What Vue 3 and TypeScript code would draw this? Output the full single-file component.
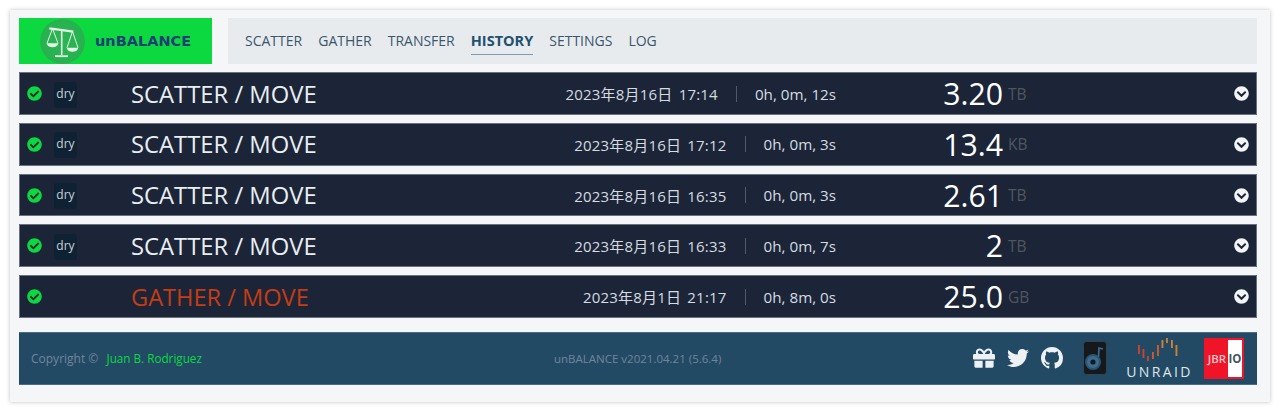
<script setup lang="ts">
interface Op {
  ok: boolean
  dry: boolean
  title: string
  kind: 'scatter' | 'gather'
  date: string
  took: string
  size: string
  unit: string
}

const tabs = ['SCATTER', 'GATHER', 'TRANSFER', 'HISTORY', 'SETTINGS', 'LOG']

const ops: Op[] = [
  { ok: true, dry: true, title: 'SCATTER / MOVE', kind: 'scatter', date: '2023年8月16日 17:14', took: '0h, 0m, 12s', size: '3.20', unit: 'TB' },
  { ok: true, dry: true, title: 'SCATTER / MOVE', kind: 'scatter', date: '2023年8月16日 17:12', took: '0h, 0m, 3s', size: '13.4', unit: 'KB' },
  { ok: true, dry: true, title: 'SCATTER / MOVE', kind: 'scatter', date: '2023年8月16日 16:35', took: '0h, 0m, 3s', size: '2.61', unit: 'TB' },
  { ok: true, dry: true, title: 'SCATTER / MOVE', kind: 'scatter', date: '2023年8月16日 16:33', took: '0h, 0m, 7s', size: '2', unit: 'TB' },
  { ok: true, dry: false, title: 'GATHER / MOVE', kind: 'gather', date: '2023年8月1日 21:17', took: '0h, 8m, 0s', size: '25.0', unit: 'GB' }
]

// x, top, height of the unraid logo bars
const bars = [
  { x: 4, y: 7, h: 9, c: '#c8432e' },
  { x: 8.5, y: 11, h: 9, c: '#c8432e' },
  { x: 13, y: 18, h: 5, c: '#c8432e' },
  { x: 18, y: 14, h: 7, c: '#cc5a30' },
  { x: 23, y: 7, h: 11, c: '#cc5a30' },
  { x: 27.5, y: 2, h: 8, c: '#cf7f35' },
  { x: 32, y: 0, h: 5, c: '#cf7f35' },
  { x: 37, y: 2, h: 8, c: '#cf7f35' },
  { x: 41.5, y: 7, h: 11, c: '#cf7f35' }
]
</script>

<template>
  <div class="page">
    <div class="card">
      <header class="top">
        <div class="logo">
          <div class="logo-disc">
            <svg viewBox="0 0 45 45" width="45" height="45" fill="none" stroke="#e6f5e8" stroke-width="1">
              <path d="M21.7 10v26" stroke-width="1.6" />
              <path d="M9.3 9.3l24 3.4" stroke-width="2.2" />
              <path d="M15 37.2h13" stroke-width="1.8" />
              <path d="M12.5 9.5L7 24.3M12.5 9.5l5.5 14.8M32.5 12.5L27 28.7M32.5 12.5l5.5 16.2" />
              <path d="M6.7 24.3h11.6c-.8 3-3 4-5.8 4s-5-1-5.8-4zM26.7 28.7h11.6c-.8 3-3 4-5.8 4s-5-1-5.8-4z" fill="#e6f5e8" stroke="none" />
            </svg>
          </div>
          <span class="logo-name">unBALANCE</span>
        </div>
        <nav class="tabs">
          <a v-for="tab in tabs" :key="tab" :class="['tab', { active: tab === 'HISTORY' }]">{{ tab }}</a>
        </nav>
      </header>

      <section class="ops">
        <div v-for="(op, i) in ops" :key="i" class="op">
          <svg class="check" viewBox="0 0 512 512">
            <path d="M504 256c0 136.967-111.033 248-248 248S8 392.967 8 256 119.033 8 256 8s248 111.033 248 248zM227.314 387.314l184-184c6.248-6.248 6.248-16.379 0-22.627l-22.627-22.627c-6.248-6.249-16.379-6.249-22.628 0L216 308.118l-70.059-70.059c-6.248-6.248-16.379-6.248-22.628 0l-22.627 22.627c-6.248 6.248-6.248 16.379 0 22.627l104 104c6.249 6.25 16.379 6.25 22.628.001z" />
          </svg>
          <div class="dry-cell"><span v-if="op.dry" class="dry">dry</span></div>
          <div :class="['title', op.kind]">{{ op.title }}</div>
          <div class="when">
            <span class="date">{{ op.date }}</span>
            <span class="sep"></span>
            <span>{{ op.took }}</span>
          </div>
          <div class="size">{{ op.size }}</div>
          <div class="unit">{{ op.unit }}</div>
          <svg class="more" viewBox="0 0 512 512">
            <path d="M504 256c0 137-111 248-248 248S8 393 8 256 119 8 256 8s248 111 248 248zM273 369.9l135.5-135.5c9.4-9.4 9.4-24.6 0-33.9l-17-17c-9.4-9.4-24.6-9.4-33.9 0L256 285.1 154.4 183.5c-9.4-9.4-24.6-9.4-33.9 0l-17 17c-9.4 9.4-9.4 24.6 0 33.9L239 369.9c9.4 9.4 24.6 9.4 34 0z" />
          </svg>
        </div>
      </section>

      <footer class="foot">
        <div class="copy">Copyright ©&nbsp;&nbsp;<a class="author">Juan B. Rodriguez</a></div>
        <div class="version">unBALANCE v2021.04.21 (5.6.4)</div>
        <div class="links">
          <svg class="glyph" viewBox="0 0 512 512">
            <path d="M32 448c0 17.7 14.3 32 32 32h160V320H32v128zm256 32h160c17.7 0 32-14.3 32-32V320H288v160zm192-320h-42.1c6.2-12.1 10.1-25.5 10.1-40 0-48.5-39.5-88-88-88-41.6 0-68.5 21.3-103 68.3-34.5-47-61.4-68.3-103-68.3-48.5 0-88 39.5-88 88 0 14.5 3.8 27.9 10.1 40H32c-17.7 0-32 14.3-32 32v80c0 8.8 7.2 16 16 16h480c8.8 0 16-7.2 16-16v-80c0-17.7-14.3-32-32-32zm-326.1 0c-22.1 0-40-17.9-40-40s17.9-40 40-40c19.9 0 34.6 3.3 86.1 80h-86.1zm206.1 0h-86.1c51.4-76.5 65.7-80 86.1-80 22.1 0 40 17.9 40 40s-17.9 40-40 40z" />
          </svg>
          <svg class="glyph" viewBox="0 0 512 512">
            <path d="M459.37 151.716c.325 4.548.325 9.097.325 13.645 0 138.72-105.583 298.558-298.558 298.558-59.452 0-114.68-17.219-161.137-47.106 8.447.974 16.568 1.299 25.34 1.299 49.055 0 94.213-16.568 130.274-44.832-46.132-.975-84.792-31.188-98.112-72.772 6.498.974 12.995 1.624 19.818 1.624 9.421 0 18.843-1.3 27.614-3.573-48.081-9.747-84.143-51.98-84.143-102.985v-1.299c13.969 7.797 30.214 12.67 47.431 13.319-28.264-18.843-46.781-51.005-46.781-87.391 0-19.492 5.197-37.36 14.294-52.954 51.655 63.675 129.3 105.258 216.365 109.807-1.624-7.797-2.599-15.918-2.599-24.04 0-57.828 46.782-104.934 104.934-104.934 30.213 0 57.502 12.67 76.67 33.137 23.715-4.548 46.456-13.32 66.599-25.34-7.798 24.366-24.366 44.833-46.132 57.827 21.117-2.273 41.584-8.122 60.426-16.243-14.292 20.791-32.161 39.308-52.628 54.253z" />
          </svg>
          <svg class="glyph" viewBox="0 0 16 16">
            <path d="M8 0C3.58 0 0 3.58 0 8c0 3.54 2.29 6.53 5.47 7.59.4.07.55-.17.55-.38 0-.19-.01-.82-.01-1.49-2.01.37-2.53-.49-2.69-.94-.09-.23-.48-.94-.82-1.13-.28-.15-.68-.52-.01-.53.63-.01 1.08.58 1.23.82.72 1.21 1.87.87 2.33.66.07-.52.28-.87.51-1.07-1.78-.2-3.64-.89-3.64-3.95 0-.87.31-1.59.82-2.15-.08-.2-.36-1.02.08-2.12 0 0 .67-.21 2.2.82.64-.18 1.32-.27 2-.27.68 0 1.36.09 2 .27 1.53-1.04 2.2-.82 2.2-.82.44 1.1.16 1.92.08 2.12.51.56.82 1.27.82 2.15 0 3.07-1.87 3.75-3.65 3.95.29.25.54.73.54 1.48 0 1.07-.01 1.93-.01 2.2 0 .21.15.46.55.38A8.013 8.013 0 0016 8c0-4.42-3.58-8-8-8z" />
          </svg>
          <svg class="vinyl" viewBox="0 0 24 34" width="24" height="34">
            <rect x="0.5" y="0.5" width="23" height="33" rx="3" fill="#16191c" stroke="#2f4456" />
            <circle cx="10" cy="21" r="7" fill="#3b6d92" stroke="#2c5470" stroke-width="2" />
            <circle cx="10" cy="21" r="2.6" fill="#16191c" />
            <path d="M15.5 16L16 7l4 1" fill="none" stroke="#3b6d92" stroke-width="1.7" />
          </svg>
          <div class="unraid">
            <svg viewBox="0 0 52 24" width="52" height="24">
              <rect v-for="b in bars" :key="b.x" :x="b.x" :y="b.y + 1" width="1.9" :height="b.h" :fill="b.c" />
            </svg>
            <span>UNRAID</span>
          </div>
          <div class="jbrio"><span class="jbr">JBR</span><span class="io">IO</span></div>
        </div>
      </footer>
    </div>
  </div>
</template>

<style>
html,
body {
  margin: 0;
  background: #fff;
}
</style>

<style scoped>
.page {
  height: 411px;
  padding: 10px 10px 9px;
  box-sizing: border-box;
  font-family: "Open Sans", "Noto Sans CJK SC", sans-serif;
}

.card {
  height: 392px;
  box-sizing: border-box;
  padding: 8px 13px 0 9px;
  background: #f4f6f8;
  box-shadow: 0 0 4px rgba(0, 0, 0, 0.25);
}

.top {
  display: flex;
  gap: 16px;
  height: 46px;
}

.logo {
  width: 193px;
  flex: none;
  display: flex;
  align-items: center;
  padding-left: 21px;
  box-sizing: border-box;
  background: #0bd93f;
}

.logo-disc {
  width: 45px;
  height: 45px;
  border-radius: 50%;
  display: flex;
  align-items: center;
  justify-content: center;
  background: radial-gradient(circle, #2cb554 0%, #27b04e 80%, #1aa646 90%, #14c846 100%);
}

.logo-name {
  margin-left: 10px;
  font-family: "DejaVu Sans", sans-serif;
  font-weight: 700;
  font-size: 14.5px;
  color: #1d3f73;
}

.tabs {
  flex: 1;
  display: flex;
  align-items: center;
  gap: 16px;
  padding-left: 17px;
  background: #e8ebee;
}

.tab {
  font-size: 14px;
  line-height: 27px;
  color: #39566c;
  box-sizing: border-box;
  height: 28px;
}

.tab.active {
  font-weight: 700;
  font-size: 14.5px;
  color: #22506f;
  border-bottom: 1px solid #7f9bb0;
}

.ops {
  display: flex;
  flex-direction: column;
  gap: 8px;
  margin-top: 8px;
}

.op {
  height: 42.8px;
  box-sizing: border-box;
  display: grid;
  grid-template-columns: 27px 77px 300px 405px 167px 40px 1fr;
  align-items: center;
  padding-left: 7px;
  background: #1b2537;
  border: 1px solid #67727e;
}

.check {
  width: 15px;
  height: 15px;
  fill: #0bd93f;
}

.dry-cell {
  height: 26px;
}

.dry {
  display: inline-block;
  width: 23px;
  height: 26px;
  line-height: 24px;
  text-align: center;
  font-size: 12px;
  border-radius: 3px;
  color: #c9d2da;
  background: #0f2234;
}

.title {
  font-size: 23.8px;
  white-space: nowrap;
}

.title.scatter {
  color: #e9eef2;
}

.title.gather {
  color: #c63c14;
  font-size: 23.6px;
}

.when {
  display: flex;
  align-items: center;
  justify-content: flex-end;
  font-size: 15.2px;
  color: #d5dbe0;
  white-space: nowrap;
}

.date {
  font-size: 15px;
  letter-spacing: 0.2px;
  word-spacing: 2px;
}

.sep {
  width: 1px;
  height: 16px;
  margin: 0 18px;
  background: #4f5a68;
}

.size {
  font-size: 30.2px;
  text-align: right;
  color: #fff;
}

.unit {
  padding-left: 5px;
  font-size: 15.5px;
  color: #4f5660;
}

.more {
  justify-self: end;
  margin-right: 7px;
  width: 15px;
  height: 15px;
  fill: #f2f4f6;
}

.foot {
  display: flex;
  align-items: center;
  height: 53px;
  margin-top: 14px;
  padding-left: 12px;
  box-sizing: border-box;
  background: #234a65;
  border-top: 1px solid #4c6b82;
  border-bottom: 1px solid #4c6b82;
  font-size: 12px;
}

.copy {
  width: 523px;
  color: #71859a;
}

.author {
  margin-left: 2px;
  color: #0bd93f;
  font-size: 11.7px;
}

.version {
  color: #71859a;
  font-size: 11.5px;
}

.links {
  margin-left: auto;
  display: flex;
  align-items: center;
  padding-right: 13px;
}

.glyph {
  width: 22px;
  height: 22px;
  margin-left: 12px;
  fill: #edf1f4;
}

.vinyl {
  margin-left: 20px;
}

.unraid {
  margin-left: 20px;
  width: 65px;
  display: flex;
  flex-direction: column;
  align-items: center;
  gap: 3px;
  color: #dfe5ea;
  font-size: 14px;
  letter-spacing: 2.4px;
  line-height: 16px;
  white-space: nowrap;
}

.jbrio {
  margin-left: 12px;
  width: 40px;
  height: 41px;
  box-sizing: border-box;
  border: 2px solid #f01428;
  display: flex;
  font-size: 11.5px;
  font-weight: 600;
  line-height: 37px;
}

.jbr {
  width: 22px;
  text-align: center;
  color: #f8c8cc;
  background: #f01428;
}

.io {
  flex: 1;
  text-align: center;
  font-weight: 700;
  color: #3f5666;
  background: #fff;
}
</style>
